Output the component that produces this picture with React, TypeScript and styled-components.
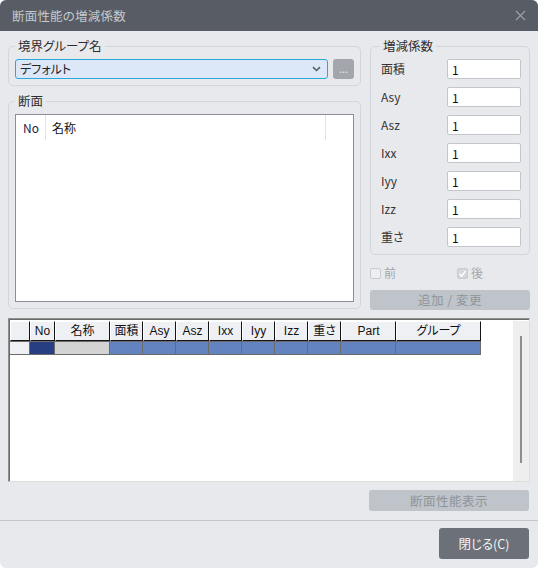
import React from "react";
import styled, { createGlobalStyle } from "styled-components";

const GlobalStyle = createGlobalStyle`
  html, body {
    margin: 0;
    padding: 0;
    background: #ffffff;
  }
  body {
    font-family: "Noto Sans CJK JP", "Noto Sans", sans-serif;
    font-size: 12px;
    color: #2b2b2b;
    font-feature-settings: "palt";
  }
  * {
    box-sizing: border-box;
  }
`;

const Window = styled.div`
  width: 538px;
  height: 568px;
  display: flex;
  flex-direction: column;
  background: #e8e9ec;
  border-radius: 6px;
  overflow: hidden;
`;

const TitleBar = styled.div`
  height: 31px;
  flex: none;
  display: flex;
  align-items: center;
  justify-content: space-between;
  padding: 0 12px;
  background: #585d65;
`;

const Title = styled.span`
  color: #c6c9cd;
  font-size: 12.5px;
  line-height: 16px;
  letter-spacing: 0.2px;
`;

const Body = styled.div`
  flex: 1;
  display: flex;
  flex-direction: column;
  padding: 7px 8px 9px 8px;
  border-bottom: 1px solid #c3c7cc;
`;

const TopArea = styled.div`
  display: grid;
  grid-template-columns: 353px 160px;
  column-gap: 9px;
`;

const Column = styled.div<{ $gap?: number }>`
  display: flex;
  flex-direction: column;
  gap: ${(p) => p.$gap ?? 7}px;
`;

const Group = styled.fieldset<{ $padBottom?: number; $padRight?: number; $padLeft?: number }>`
  margin: 0;
  min-width: 0;
  padding: 5px ${(p) => p.$padRight ?? 6}px ${(p) => p.$padBottom ?? 6}px
    ${(p) => p.$padLeft ?? 6}px;
  border: 1px solid #d2d5da;
  border-radius: 5px;
`;

const Legend = styled.legend<{ $shift?: number }>`
  padding: 0 3px;
  margin-left: ${(p) => p.$shift ?? 0}px;
  font-size: 12.5px;
  line-height: 16px;
  color: #2e2e2e;
`;

const ComboRow = styled.div`
  display: flex;
  align-items: center;
  gap: 5px;
`;

const Combo = styled.div`
  flex: 1;
  height: 20px;
  display: flex;
  align-items: center;
  justify-content: space-between;
  padding: 0 6px 0 4px;
  background: #dce7f8;
  border: 1px solid #2aa8dc;
  border-radius: 3px;
  font-size: 12px;
  line-height: 16px;
  color: #222;
`;

const DotsButton = styled.div`
  width: 21px;
  height: 20px;
  display: flex;
  align-items: center;
  justify-content: center;
  background: #a3a7ad;
  border-radius: 3px;
  color: #e6e7e9;
  font-size: 11px;
  line-height: 10px;
  padding-bottom: 2px;
`;

const ListBox = styled.div`
  height: 188px;
  background: #ffffff;
  border: 1px solid #8b8e93;
`;

const ListHeader = styled.div`
  display: grid;
  grid-template-columns: 30px 280px;
  height: 25px;
`;

const ListHead = styled.div<{ $navy?: boolean }>`
  display: flex;
  align-items: center;
  padding-left: ${(p) => (p.$navy ? 7 : 6)}px;
  border-right: 1px solid #e1e2e4;
  font-size: 12px;
  line-height: 16px;
  color: ${(p) => (p.$navy ? "#1d1d4c" : "#111")};
`;

const FactorList = styled.div`
  display: flex;
  flex-direction: column;
  gap: 8px;
`;

const FactorRow = styled.div`
  display: grid;
  grid-template-columns: 66px 74px;
  align-items: center;
`;

const FactorLabel = styled.span`
  font-size: 12px;
  line-height: 16px;
  color: #333;
`;

const FactorInput = styled.div`
  height: 20px;
  display: flex;
  align-items: center;
  padding-left: 4px;
  background: #ffffff;
  border: 1px solid #c3c6cb;
  border-radius: 2px;
  font-size: 12px;
  color: #111;
`;

const CheckRow = styled.div`
  display: grid;
  grid-template-columns: 87px 1fr;
  margin-top: 11px;
  height: 14px;
  align-items: center;
`;

const CheckItem = styled.div`
  display: flex;
  align-items: center;
  gap: 3px;
  font-size: 12px;
  line-height: 14px;
  color: #a2a6ab;
`;

const Box = styled.span<{ $checked?: boolean }>`
  width: 11px;
  height: 11px;
  display: flex;
  align-items: center;
  justify-content: center;
  border: 1px solid #c8cbd0;
  border-radius: 2px;
  background: ${(p) => (p.$checked ? "#d3d6da" : "#eceef1")};
`;

const FlatButton = styled.div<{ $width?: number; $height?: number }>`
  height: ${(p) => p.$height ?? 21}px;
  width: ${(p) => (p.$width ? `${p.$width}px` : "auto")};
  display: flex;
  align-items: center;
  justify-content: center;
  background: #bec4ca;
  border-radius: 3px;
  color: #8f959b;
  font-size: 12.5px;
  line-height: 16px;
  letter-spacing: 0.5px;
`;

const AddButton = styled(FlatButton)`
  margin-top: 10px;
`;

const GridBox = styled.div`
  margin-top: 8px;
  height: 164px;
  display: flex;
  background: #ffffff;
  border-top: 1px solid #8e8e8e;
  border-left: 1px solid #8e8e8e;
  border-right: 1px solid #dedede;
  border-bottom: 1px solid #dedede;
  box-shadow: inset 1px 1px 0 #6b6b6b;
  padding: 2px 0 0 1px;
`;

const TableArea = styled.div`
  flex: 1;
`;

const Table = styled.div`
  display: grid;
  grid-template-columns: 20px 25px 55px 33px 33px 33px 33px 33px 33px 33px 55px 85px;
  grid-template-rows: 20px 14px;
`;

const HeadCell = styled.div`
  display: flex;
  align-items: center;
  justify-content: center;
  background: #eff0f4;
  border-top: 1px solid #ffffff;
  border-left: 1px solid #ffffff;
  border-right: 1px solid #141414;
  border-bottom: 1px solid #141414;
  font-family: "Liberation Sans", "Noto Sans CJK JP", sans-serif;
  font-size: 12px;
  line-height: 14px;
  color: #111;
`;

const RowCell = styled.div<{ $bg: string }>`
  background: ${(p) => p.$bg};
  border-right: 1px solid #6b6b6b;
  border-bottom: 1px solid #6b6b6b;
  border-top: 1px solid #6b6b6b;
`;

const ScrollTrack = styled.div`
  width: 16px;
  display: flex;
  justify-content: center;
  padding-top: 15px;
  background: #eeeeee;
`;

const ScrollLine = styled.div`
  width: 2px;
  height: 127px;
  background: #8e8e8e;
`;

const ButtonRow = styled.div`
  display: flex;
  justify-content: flex-end;
  margin-top: 8px;
  padding-right: 1px;
`;

const Footer = styled.div`
  height: 47px;
  display: flex;
  justify-content: flex-end;
  padding: 7px 9px 0 0;
`;

const CloseButton = styled.div`
  width: 90px;
  height: 31px;
  display: flex;
  align-items: center;
  justify-content: center;
  background: #6b7079;
  border-radius: 3px;
  color: #f4f5f6;
  font-size: 12.5px;
  line-height: 16px;
`;

const factors = ["面積", "Asy", "Asz", "Ixx", "Iyy", "Izz", "重さ"];
const columns = ["", "No", "名称", "面積", "Asy", "Asz", "Ixx", "Iyy", "Izz", "重さ", "Part", "グループ"];
const rowColors = ["#eef0f4", "#273f82", "#d3d3d3"];

const Chevron = () => (
  <svg width="9" height="6" viewBox="0 0 9 6">
    <path d="M1 1.2 L4.5 4.5 L8 1.2" fill="none" stroke="#5d6066" strokeWidth="1.6" />
  </svg>
);

const CloseIcon = () => (
  <svg width="11" height="11" viewBox="0 0 11 11">
    <path d="M1 1 L10 10 M10 1 L1 10" stroke="#9da1a7" strokeWidth="1.1" />
  </svg>
);

const Tick = () => (
  <svg width="9" height="9" viewBox="0 0 9 9">
    <path d="M1.5 4.8 L3.6 7 L7.6 2" fill="none" stroke="#ffffff" strokeWidth="1.5" />
  </svg>
);

const App = () => {
  return (
    <>
      <GlobalStyle />
      <Window>
        <TitleBar>
          <Title>断面性能の増減係数</Title>
          <CloseIcon />
        </TitleBar>
        <Body>
          <TopArea>
            <Column>
              <Group>
                <Legend>境界グループ名</Legend>
                <ComboRow>
                  <Combo>
                    デフォルト
                    <Chevron />
                  </Combo>
                  <DotsButton>...</DotsButton>
                </ComboRow>
              </Group>
              <Group>
                <Legend>断面</Legend>
                <ListBox>
                  <ListHeader>
                    <ListHead $navy>No</ListHead>
                    <ListHead>名称</ListHead>
                  </ListHeader>
                </ListBox>
              </Group>
            </Column>
            <Column $gap={0}>
              <Group $padLeft={10} $padRight={8} $padBottom={7}>
                <Legend $shift={-1}>増減係数</Legend>
                <FactorList>
                  {factors.map((f) => (
                    <FactorRow key={f}>
                      <FactorLabel>{f}</FactorLabel>
                      <FactorInput>1</FactorInput>
                    </FactorRow>
                  ))}
                </FactorList>
              </Group>
              <CheckRow>
                <CheckItem>
                  <Box />前
                </CheckItem>
                <CheckItem>
                  <Box $checked>
                    <Tick />
                  </Box>
                  後
                </CheckItem>
              </CheckRow>
              <AddButton $height={20}>追加 / 変更</AddButton>
            </Column>
          </TopArea>
          <GridBox>
            <TableArea>
              <Table>
                {columns.map((c, i) => (
                  <HeadCell key={`h${i}`}>{c}</HeadCell>
                ))}
                {columns.map((_, i) => (
                  <RowCell key={`r${i}`} $bg={rowColors[i] ?? "#6283c0"} />
                ))}
              </Table>
            </TableArea>
            <ScrollTrack>
              <ScrollLine />
            </ScrollTrack>
          </GridBox>
          <ButtonRow>
            <FlatButton $width={160}>断面性能表示</FlatButton>
          </ButtonRow>
        </Body>
        <Footer>
          <CloseButton>閉じる(C)</CloseButton>
        </Footer>
      </Window>
    </>
  );
};

export default App;
